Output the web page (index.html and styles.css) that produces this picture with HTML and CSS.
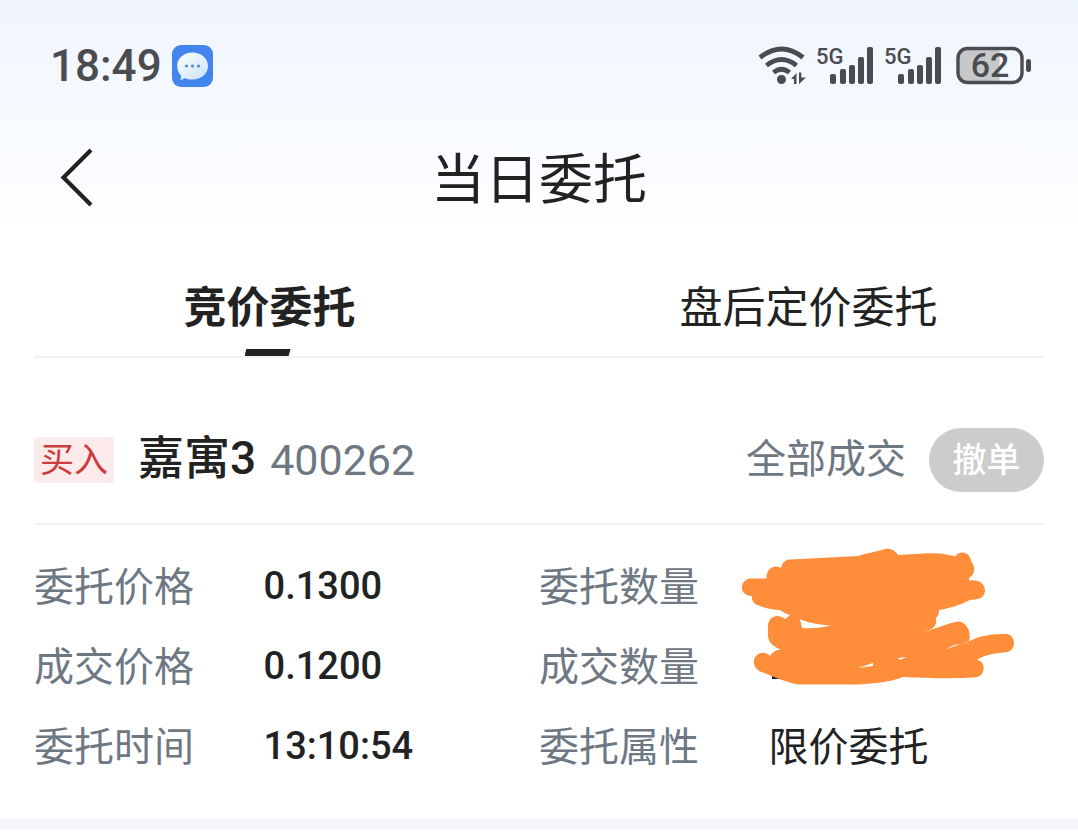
FILE: index.html
```
<!DOCTYPE html>
<html lang="zh-CN">
  <head>
    <meta charset="utf-8">
    <meta name="viewport" content="width=device-width, initial-scale=1">
    <title>当日委托</title>
    <link rel="stylesheet" href="styles.css">
  </head>
  <body>
    <div class="statusbar">
      <span class="clock">18:49</span>
      <svg class="msg" viewBox="0 0 41 42" width="41" height="42">
        <defs>
          <linearGradient id="bubble" x1="0" y1="0" x2="1" y2="1">
            <stop offset="0" stop-color="#ffffff"/>
            <stop offset="1" stop-color="#c8e2fb"/>
          </linearGradient>
        </defs>
        <rect width="41" height="42" rx="9" fill="#4285ee"/>
        <path d="M20.500 7.500C29 7.500 36 13 36 21S29 34.500 20.500 34.500C17.500 34.500 15 34 13 33C11.500 34 10 34.800 8.300 35C9 33.500 9.200 32 8.800 30.300C6.500 28 5.200 25 5.200 21C5.200 13 12 7.500 20.500 7.500Z" fill="url(#bubble)"/>
        <g fill="#5b8bc9">
          <circle cx="14.500" cy="21" r="1.600"/>
          <circle cx="20.500" cy="21" r="1.600"/>
          <circle cx="26.500" cy="21" r="1.600"/>
        </g>
      </svg>

      <div class="signals">
        <svg viewBox="0 0 48 40" width="48" height="40">
          <g fill="none" stroke="#4b4c4f" stroke-width="4.800">
            <path d="M2 11.500Q23.500 -5.500 45 11.500"/>
            <path d="M8.500 19.500Q23.500 7.500 38.500 19.500"/>
            <path d="M15.500 26.500Q23.500 20 31.500 26.500"/>
          </g>
          <circle cx="23.500" cy="33.500" r="4.500" fill="#4b4c4f"/>
          <path d="M33 33L38.500 27V38H36V33ZM41 26.500H43.300V31.500H48L41 38Z" fill="#4b4c4f"/>
        </svg>
        <svg class="cell" viewBox="0 0 58 40" width="58" height="40">
          <text x="0" y="18">5G</text>
          <rect x="14" y="28" width="6" height="10" rx="2"/>
          <rect x="24" y="23" width="6" height="15" rx="2"/>
          <rect x="33" y="19" width="6" height="19" rx="2"/>
          <rect x="42" y="11" width="6" height="27" rx="2"/>
          <rect x="51" y="1" width="6" height="37" rx="2"/>
        </svg>
        <svg class="cell" viewBox="0 0 58 40" width="58" height="40">
          <text x="0" y="18">5G</text>
          <rect x="14" y="28" width="6" height="10" rx="2"/>
          <rect x="24" y="23" width="6" height="15" rx="2"/>
          <rect x="33" y="19" width="6" height="19" rx="2"/>
          <rect x="42" y="11" width="6" height="27" rx="2"/>
          <rect x="51" y="1" width="6" height="37" rx="2"/>
        </svg>
        <svg class="battery" viewBox="0 0 76 40" width="76" height="40">
          <path d="M11 2H43.500V37H11Q2 37 2 28V11Q2 2 11 2Z" fill="#c6c8cc"/>
          <rect x="2" y="2.500" width="64" height="34" rx="9.500" fill="none" stroke="#4b4c4f" stroke-width="3.400"/>
          <rect x="70" y="13" width="5" height="13" rx="2.500" fill="#4b4c4f"/>
          <text x="34" y="31" text-anchor="middle">62</text>
        </svg>
      </div>
    </div>

    <header class="navbar">
      <button class="back" type="button" aria-label="返回">
        <svg viewBox="0 0 34 58" width="34" height="58">
          <path d="M31 2L3.500 29.500L31 57" fill="none" stroke="#222" stroke-width="4.200"/>
        </svg>
      </button>
      <h1>当日委托</h1>
    </header>

    <nav class="tabs">
      <button class="tab active" type="button">竞价委托</button>
      <button class="tab" type="button">盘后定价委托</button>
    </nav>

    <main class="order">
      <div class="order-head">
        <span class="side">买入</span>
        <h2>嘉寓3</h2>
        <span class="code">400262</span>
        <span class="state">全部成交</span>
        <button class="cancel" type="button">撤单</button>
      </div>

      <dl class="details">
        <dt>委托价格</dt>
        <dd>0.1300</dd>
        <dt>委托数量</dt>
        <dd class="hidden-value">
          <!-- marker strokes over both quantity values -->
          <svg class="scribble" viewBox="0 0 320 170" width="320" height="170">
            <rect x="52" y="141" width="9" height="3" fill="#222"/>
            <path fill="#ff8d3a" fill-rule="evenodd" d="M31 43.500H46.500C46 34 54 29 61 33C62 27 66 24.500 71 24.500L138 21C147 18 155 17 162 15C169 12 175 15 178 20L204 18.500C215 18 225 19 231 20.500Q234 20 235 22C238 15 250 16 251 26C256 32 255 40 249 43V45.500C258 44 265 48 265 56C264 65 256 64 250 65C240 70 231 73 219 75C219 79 218 81 216 83C217 92 212 94 209 95L203 97C216 94 227 88 239 86.500C247 87 251 98 249.500 104Q249 108 243 109L254 104C263 100 275 99 286 99C294 99 296 110 292 114C289 118 285 117 279 118C270 119 263 121 257 125C263 126 264 131 263.500 135C262 140 260 142 254 142.500C230 144 205 143 183 142C170 147 155 148.500 139 149.500H81C73 149.500 66 146 59 144C51 141 45 138 39 136C33 132 32 124 37 120C41 117 46 117 50 121C53 116 57 115 61 114.500C52 111 48 107 48 100V90C49 82 57 78 65 84Q68 82 70 80C66 79 63 77 60 75C50 75 42 72 35 69Q31 65 32 61C25 61 21 56 22 51C23 46 27 43.500 31 43.500ZM80 84L82 93C92 93.500 101 93 111 90.500C100 90 89 88 80 84ZM138 133L153 128V131ZM178 123L187 122L180 125ZM224 115L234 110L241 109L232 112Z"/>
          </svg>
        </dd>
        <dt>成交价格</dt>
        <dd>0.1200</dd>
        <dt>成交数量</dt>
        <dd></dd>
        <dt>委托时间</dt>
        <dd>13:10:54</dd>
        <dt>委托属性</dt>
        <dd class="text-value">限价委托</dd>
      </dl>
    </main>
  </body>
</html>
```

FILE: styles.css
```
* {
  box-sizing: border-box;
  margin: 0;
  padding: 0;
}

body {
  background: #fff linear-gradient(#eff5ff, #fff 240px) no-repeat;
  color: #222;
  font-family: Roboto, "Noto Sans CJK SC", sans-serif;
}

button {
  border: 0;
  background: none;
  color: inherit;
  font: inherit;
}

svg {
  display: block;
  flex: none;
  overflow: visible;
}

.statusbar {
  display: flex;
  align-items: center;
  height: 132px;
  padding: 0 46px 0 50px;
}

.clock {
  color: #4b4c4f;
  font-size: 44px;
  font-weight: 500;
}

.msg {
  margin-left: 10px;
}

.signals {
  display: flex;
  gap: 10px;
  margin-left: auto;
}

.cell {
  fill: #4b4c4f;
}

.cell text {
  font-size: 22px;
  font-weight: 500;
}

.battery {
  margin-left: 4px;
}

.battery text {
  fill: #4b4c4f;
  font-size: 34px;
  font-weight: 500;
}

.navbar {
  display: grid;
  grid-template-columns: 1fr auto 1fr;
  align-items: center;
  height: 94px;
  padding: 0 60px;
}

.back {
  justify-self: start;
  padding-bottom: 4px;
}

.navbar h1 {
  padding-top: 4px;
  font-size: 54px;
  font-weight: 400;
  line-height: 80px;
}

.tabs {
  display: flex;
  margin-top: 30px;
}

.tab {
  position: relative;
  flex: 1;
  height: 100px;
  padding-bottom: 4px;
  font-size: 43px;
}

.active {
  font-weight: 700;
}

.active::after {
  content: "";
  position: absolute;
  bottom: 0;
  left: 50%;
  width: 46px;
  height: 7px;
  margin-left: -25px;
  background: #222;
  clip-path: polygon(4% 0, 100% 0, 96% 100%, 0 100%);
}

.order {
  padding: 0 34px;
  border-bottom: 11px solid #f4f6fb;
}

.order-head {
  display: flex;
  align-items: center;
  height: 169px;
  padding-top: 38px;
  border-top: 2px solid #f2f2f2;
  border-bottom: 2px solid #f2f2f2;
}

.side {
  width: 80px;
  border-radius: 4px;
  background: #fdeaea;
  color: #cb3c3d;
  font-size: 34px;
  line-height: 46px;
  text-align: center;
}

.order-head h2 {
  margin-left: 24px;
  padding-bottom: 4px;
  font-size: 46px;
  font-weight: 500;
  line-height: 64px;
}

.code {
  margin-left: 14px;
  color: #6d7883;
  font-size: 43px;
}

.state {
  margin-left: auto;
  color: #6d7883;
  font-size: 40px;
  line-height: 64px;
}

.cancel {
  width: 115px;
  height: 64px;
  margin-left: 23px;
  padding-bottom: 4px;
  border-radius: 32px;
  background: #ccc;
  color: #fff;
  font-size: 34px;
  font-weight: 500;
}

.details {
  display: grid;
  grid-template-columns: 5fr 6fr 5fr 6fr;
  grid-auto-rows: 80px;
  padding: 23px 0 31px;
  font-size: 40px;
  line-height: 80px;
}

.details dt {
  color: #6d7883;
}

.details dd {
  font-size: 38px;
  font-weight: 500;
  line-height: 76px;
}

.details .text-value {
  font-size: 40px;
  font-weight: 400;
  line-height: 80px;
}

.hidden-value {
  position: relative;
}

.scribble {
  position: absolute;
  top: -13px;
  left: -49px;
}
```
